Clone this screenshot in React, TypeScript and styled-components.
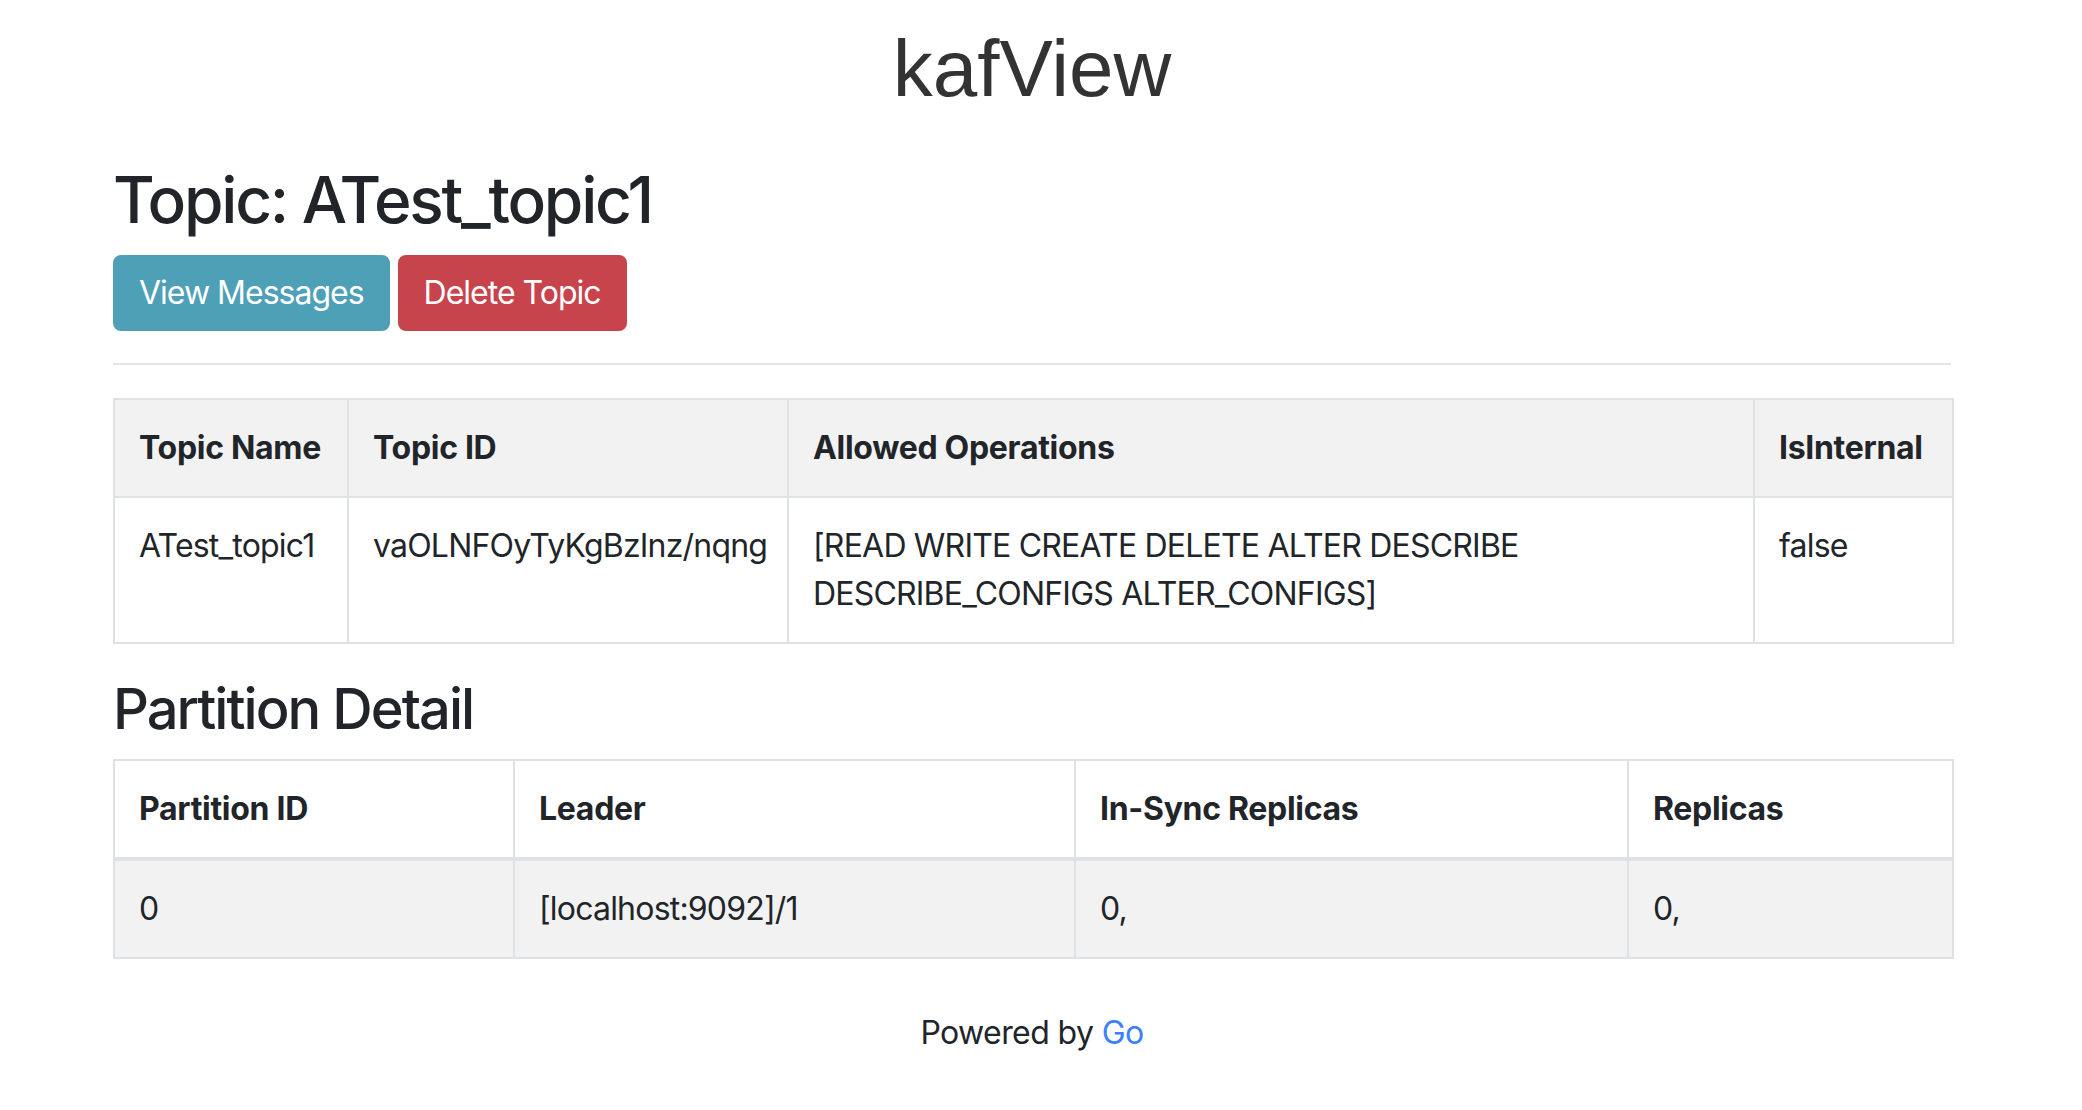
import React from "react";
import styled, { createGlobalStyle } from "styled-components";

const GlobalStyle = createGlobalStyle`
  html, body {
    margin: 0;
    padding: 0;
    background: #ffffff;
  }
  body {
    font-family: Inter, "Noto Sans", sans-serif;
    color: #212529;
    font-size: 32px;
    line-height: 48px;
  }
  * { box-sizing: border-box; }
`;

const Page = styled.div`
  padding-top: 21px;
  padding-bottom: 40px;
`;

const Container = styled.div`
  margin: 0 131px 0 113px;
`;

const Brand = styled.h1`
  margin: 0 0 45px;
  font-family: "Liberation Sans", Arial, sans-serif;
  font-weight: 400;
  font-size: 80px;
  line-height: 96px;
  color: #333333;
  text-align: center;
`;

const Heading = styled.h2<{ $size: number }>`
  margin: 0 0 16px;
  font-family: Inter, "Noto Sans", sans-serif;
  font-weight: 500;
  font-size: ${(p) => p.$size}px;
  line-height: 1.2;
  color: #212529;
  letter-spacing: -0.035em;
`;

const ButtonRow = styled.div`
  display: flex;
  gap: 8px;
`;

const Button = styled.button<{ $bg: string }>`
  height: 76px;
  padding: 12px 24px;
  border: 2px solid ${(p) => p.$bg};
  border-radius: 8px;
  background: ${(p) => p.$bg};
  color: #ffffff;
  font-family: Inter, "Noto Sans", sans-serif;
  font-size: 32px;
  line-height: 48px;
  font-weight: 400;
  letter-spacing: -1px;
  cursor: pointer;
`;

const Rule = styled.hr`
  margin: 32px 0 33px;
  border: 0;
  border-top: 2px solid rgba(0, 0, 0, 0.1);
  height: 0;
`;

const Table = styled.table`
  width: 100%;
  table-layout: fixed;
  border-collapse: collapse;
  margin-bottom: 32px;
  font-size: 32px;
  line-height: 48px;
`;

const Col = styled.col<{ $w: number }>`
  width: ${(p) => p.$w}px;
`;

const Row = styled.tr<{ $striped?: boolean }>`
  background: ${(p) => (p.$striped ? "#f2f2f2" : "#ffffff")};
`;

const HeadCell = styled.th<{ $thick?: boolean }>`
  padding: 24px;
  border: 2px solid #dee2e6;
  border-bottom-width: ${(p) => (p.$thick ? 4 : 2)}px;
  text-align: left;
  vertical-align: top;
  font-weight: 700;
  color: #212529;
  letter-spacing: -0.3px;
`;

const Cell = styled.td`
  padding: 24px;
  border: 2px solid #dee2e6;
  text-align: left;
  vertical-align: top;
  font-weight: 400;
  color: #212529;
  letter-spacing: -0.8px;
`;

const Footer = styled.footer`
  margin-top: 50px;
  text-align: center;
  font-size: 32px;
  line-height: 48px;
  color: #212529;
  letter-spacing: -0.6px;
`;

const Link = styled.a`
  color: #3a82f6;
  text-decoration: none;
`;

export default function App() {
  return (
    <>
      <GlobalStyle />
      <Page>
        <Container>
          <Brand>kafView</Brand>
          <Heading $size={64}>Topic: ATest_topic1</Heading>
          <ButtonRow>
            <Button $bg="#4ea0b6">View Messages</Button>
            <Button $bg="#c8444c">Delete Topic</Button>
          </ButtonRow>
          <Rule />
          <Table>
            <colgroup>
              <Col $w={234} />
              <Col $w={440} />
              <Col $w={966} />
              <Col $w={199} />
            </colgroup>
            <tbody>
              <Row $striped>
                <HeadCell>Topic Name</HeadCell>
                <HeadCell>Topic ID</HeadCell>
                <HeadCell>Allowed Operations</HeadCell>
                <HeadCell>IsInternal</HeadCell>
              </Row>
              <Row>
                <Cell>ATest_topic1</Cell>
                <Cell>vaOLNFOyTyKgBzInz/nqng</Cell>
                <Cell>
                  [READ WRITE CREATE DELETE ALTER DESCRIBE DESCRIBE_CONFIGS
                  ALTER_CONFIGS]
                </Cell>
                <Cell>false</Cell>
              </Row>
            </tbody>
          </Table>
          <Heading $size={56}>Partition Detail</Heading>
          <Table>
            <colgroup>
              <Col $w={400} />
              <Col $w={561} />
              <Col $w={553} />
              <Col $w={325} />
            </colgroup>
            <thead>
              <Row>
                <HeadCell $thick>Partition ID</HeadCell>
                <HeadCell $thick>Leader</HeadCell>
                <HeadCell $thick>In-Sync Replicas</HeadCell>
                <HeadCell $thick>Replicas</HeadCell>
              </Row>
            </thead>
            <tbody>
              <Row $striped>
                <Cell>0</Cell>
                <Cell>[localhost:9092]/1</Cell>
                <Cell>0,</Cell>
                <Cell>0,</Cell>
              </Row>
            </tbody>
          </Table>
          <Footer>
            Powered by <Link href="#">Go</Link>
          </Footer>
        </Container>
      </Page>
    </>
  );
}
